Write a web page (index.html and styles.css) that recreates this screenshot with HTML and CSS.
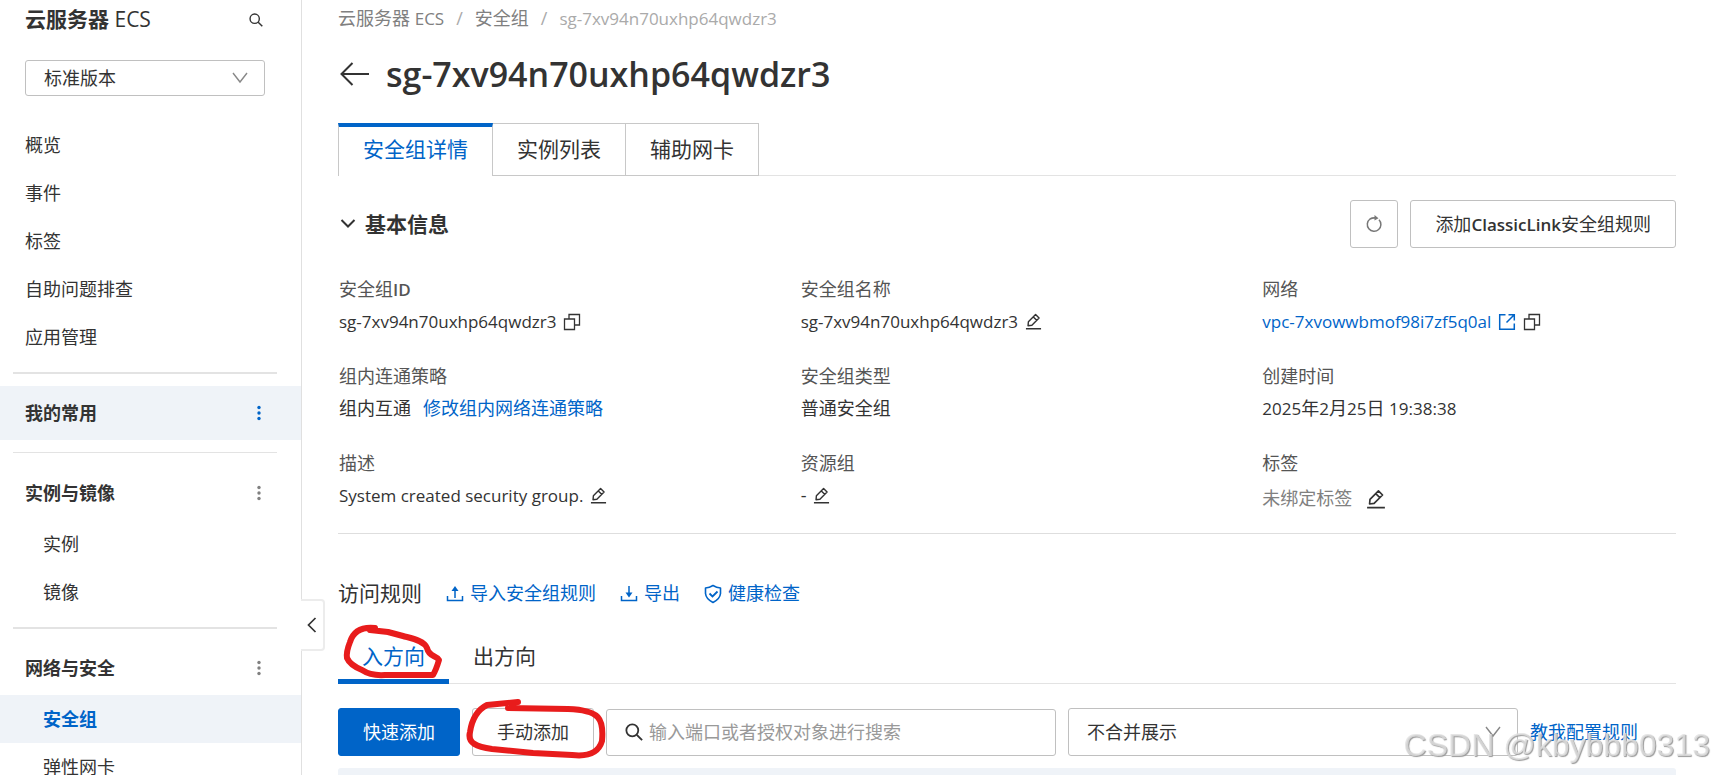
FILE: index.html
```html
<!DOCTYPE html>
<html lang="zh-CN">
<head>
    <meta charset="UTF-8">
    <meta name="viewport" content="width=device-width, initial-scale=1.0">
    <title>云服务器 ECS - 安全组</title>
    <link rel="stylesheet" href="styles.css">
</head>
<body>
    <!-- shared icons -->
    <svg class="sprite" aria-hidden="true">
        <symbol id="icon-copy" viewBox="0 0 18 18">
            <path d="M1.500 6h10v10.500h-10zM6 6V1.500h10.500v10.500h-5" fill="none" stroke="currentColor" stroke-width="1.300"/>
        </symbol>
        <symbol id="icon-edit" viewBox="0 0 18 18">
            <path d="M1 16.700h16M3.200 13.500l.4-4.200 7.600-7.600 3.700 3.700-7.600 7.600zM8.800 4.200l3.600 3.600" fill="none" stroke="currentColor" stroke-width="1.500" stroke-linejoin="round"/>
        </symbol>
        <symbol id="icon-more" viewBox="0 0 4 16">
            <circle cx="2" cy="2.500" r="1.700"/><circle cx="2" cy="8" r="1.700"/><circle cx="2" cy="13.500" r="1.700"/>
        </symbol>
        <symbol id="icon-search" viewBox="0 0 16 16">
            <path d="M10.500 10.500L15.200 15.200" stroke="currentColor" stroke-width="1.700"/>
            <circle cx="6.500" cy="6.500" r="5.300" fill="none" stroke="currentColor" stroke-width="1.600"/>
        </symbol>
        <symbol id="icon-down" viewBox="0 0 16 12">
            <path d="M1 1l7 9 7-9" fill="none" stroke="currentColor" stroke-width="1.400"/>
        </symbol>
    </svg>

    <div class="layout">
        <aside class="sidebar">
            <div class="sidebar-title">
                <h2>云服务器 <span>ECS</span></h2>
                <button class="icon-btn" aria-label="搜索"><svg width="14" height="14"><use href="#icon-search"/></svg></button>
            </div>
            <div class="select-wrap version">
                <select aria-label="版本"><option>标准版本</option></select>
                <svg width="16" height="12"><use href="#icon-down"/></svg>
            </div>
            <nav>
                <a class="nav-item" href="#">概览</a>
                <a class="nav-item" href="#">事件</a>
                <a class="nav-item" href="#">标签</a>
                <a class="nav-item" href="#">自助问题排查</a>
                <a class="nav-item" href="#">应用管理</a>
                <hr class="nav-line">
                <div class="nav-group current">
                    我的常用
                    <button class="icon-btn" aria-label="更多"><svg width="4" height="16"><use href="#icon-more"/></svg></button>
                </div>
                <hr class="nav-line thin">
                <div class="nav-group">
                    实例与镜像
                    <button class="icon-btn" aria-label="更多"><svg width="4" height="16"><use href="#icon-more"/></svg></button>
                </div>
                <a class="nav-item sub" href="#">实例</a>
                <a class="nav-item sub" href="#">镜像</a>
                <hr class="nav-line">
                <div class="nav-group">
                    网络与安全
                    <button class="icon-btn" aria-label="更多"><svg width="4" height="16"><use href="#icon-more"/></svg></button>
                </div>
                <a class="nav-item sub active" href="#">安全组</a>
                <a class="nav-item sub" href="#">弹性网卡</a>
            </nav>
            <button class="collapse" aria-label="收起">
                <svg width="10" height="16" viewBox="0 0 10 16"><path d="M8.500 1L1.500 8l7 7" fill="none" stroke="#333" stroke-width="1.700"/></svg>
            </button>
        </aside>

        <main class="main">
            <div class="breadcrumb">
                <a href="#">云服务器 <span class="latin">ECS</span></a>
                <span class="slash">/</span>
                <a href="#">安全组</a>
                <span class="slash">/</span>
                <span class="here latin">sg-7xv94n70uxhp64qwdzr3</span>
            </div>
            <div class="page-title">
                <button class="icon-btn" aria-label="返回">
                    <svg width="29" height="24" viewBox="0 0 29 24"><path d="M12.500 1L1.500 12l11 11M1.500 12H29" fill="none" stroke="#333" stroke-width="2"/></svg>
                </button>
                <h1>sg-7xv94n70uxhp64qwdzr3</h1>
            </div>

            <div class="tabs">
                <button class="tab active">安全组详情</button>
                <button class="tab">实例列表</button>
                <button class="tab">辅助网卡</button>
            </div>

            <div class="section-head">
                <svg width="16" height="12" viewBox="0 0 16 12"><path d="M1.500 2L8 8.500 14.500 2" fill="none" stroke="#333" stroke-width="2"/></svg>
                <h3>基本信息</h3>
                <button class="btn refresh" aria-label="刷新">
                    <svg width="18" height="18" viewBox="0 0 18 18"><path d="M14 4.700A6.800 6.800 0 1 1 5 4Q7.500 2.500 11 3" fill="none" stroke="#777" stroke-width="1.500"/><path d="M9.500 0l4 3.200-4 2.300z" fill="#777"/></svg>
                </button>
                <button class="btn">添加<span class="latin medium">ClassicLink</span>安全组规则</button>
            </div>

            <dl class="info">
                <div>
                    <dt>安全组<span class="latin medium">ID</span></dt>
                    <dd><span class="latin">sg-7xv94n70uxhp64qwdzr3</span><button class="icon-btn" aria-label="复制"><svg width="18" height="18"><use href="#icon-copy"/></svg></button></dd>
                </div>
                <div>
                    <dt>安全组名称</dt>
                    <dd><span class="latin">sg-7xv94n70uxhp64qwdzr3</span><button class="icon-btn" aria-label="编辑"><svg width="17" height="17"><use href="#icon-edit"/></svg></button></dd>
                </div>
                <div>
                    <dt>网络</dt>
                    <dd>
                        <a class="latin" href="#">vpc-7xvowwbmof98i7zf5q0al</a>
                        <a href="#" aria-label="打开"><svg width="18" height="18" viewBox="0 0 18 18"><path d="M7.500 1.700H1.700v14.600h14.600v-5.800M10.500 1.700h5.800v5.800M16 2L8.500 9.500" fill="none" stroke="currentColor" stroke-width="1.500"/></svg></a>
                        <button class="icon-btn" aria-label="复制"><svg width="18" height="18"><use href="#icon-copy"/></svg></button>
                    </dd>
                </div>
                <div>
                    <dt>组内连通策略</dt>
                    <dd class="policy">组内互通<a href="#">修改组内网络连通策略</a></dd>
                </div>
                <div>
                    <dt>安全组类型</dt>
                    <dd>普通安全组</dd>
                </div>
                <div>
                    <dt>创建时间</dt>
                    <dd><span><span class="latin">2025</span>年<span class="latin">2</span>月<span class="latin">25</span>日 <span class="latin">19:38:38</span></span></dd>
                </div>
                <div>
                    <dt>描述</dt>
                    <dd><span class="latin">System created security group.</span><button class="icon-btn" aria-label="编辑"><svg width="17" height="17"><use href="#icon-edit"/></svg></button></dd>
                </div>
                <div>
                    <dt>资源组</dt>
                    <dd>-<button class="icon-btn" aria-label="编辑"><svg width="17" height="17"><use href="#icon-edit"/></svg></button></dd>
                </div>
                <div>
                    <dt>标签</dt>
                    <dd class="tags">未绑定标签<button class="icon-btn" aria-label="编辑"><svg width="20" height="20"><use href="#icon-edit"/></svg></button></dd>
                </div>
            </dl>

            <div class="rules-head">
                <h3>访问规则</h3>
                <a href="#"><svg width="18" height="16" viewBox="0 0 18 16"><path d="M1.500 10v4.500h15V10M9 12V3" fill="none" stroke="currentColor" stroke-width="1.500"/><path d="M5.500 5L9 0l3.500 5z" fill="currentColor"/></svg>导入安全组规则</a>
                <a href="#"><svg width="18" height="16" viewBox="0 0 18 16"><path d="M1.500 10v4.500h15V10M9 0v8" fill="none" stroke="currentColor" stroke-width="1.500"/><path d="M5.500 6.500L9 11.500l3.500-5z" fill="currentColor"/></svg>导出</a>
                <a href="#"><svg width="18" height="20" viewBox="0 0 18 20"><path d="M9 1.500Q12.500 3.800 16.500 4v5.500Q16 15 9 18.500 2 15 1.500 9.500V4Q5.500 3.800 9 1.500z" fill="none" stroke="currentColor" stroke-width="1.600" stroke-linejoin="round"/><path d="M5.500 9.500l3 3 5-5" fill="none" stroke="currentColor" stroke-width="1.800"/></svg>健康检查</a>
            </div>

            <div class="direction-tabs">
                <button class="direction active">入方向
                    <svg class="mark" width="108" height="60" viewBox="340 622 108 60"><path d="M375 629Q355 627 350 643 346 653 347 659 350 666 362 671 371 677 385 676L433 676Q436 671 439 661C436 656 429 658 427 649 424 641 410 639 403 637L388 633 370 631"/></svg>
                </button>
                <button class="direction">出方向</button>
            </div>

            <div class="toolbar">
                <button class="btn primary">快速添加</button>
                <button class="btn manual">手动添加
                    <svg class="mark" width="146" height="66" viewBox="464 696 146 66"><path d="M518 703L487 706Q473 713 470 733C467 744 477 748 492 750L533 754 572 756Q597 759 602 742C604 720 600 711 568 710L508 709"/></svg>
                </button>
                <label class="search">
                    <svg width="18" height="18"><use href="#icon-search"/></svg>
                    <input type="text" aria-label="搜索规则" placeholder="输入端口或者授权对象进行搜索">
                </label>
                <div class="select-wrap merge">
                    <select aria-label="展示方式"><option>不合并展示</option></select>
                    <svg width="16" height="12"><use href="#icon-down"/></svg>
                </div>
                <a href="#">教我配置规则</a>
            </div>
            <div class="table-head"></div>
        </main>
    </div>
    <div class="watermark">CSDN @kbybbb0313</div>
</body>
</html>
```

FILE: styles.css
```css
* {
    box-sizing: border-box;
}
body {
    margin: 0;
    height: 100vh;
    overflow: hidden;
    font-family: "Open Sans", "Noto Sans CJK SC", sans-serif;
    font-size: 18px;
    line-height: 27px;
    color: #333;
    background: #fff;
}
h1, h2, h3, dl, dd {
    margin: 0;
}
a {
    color: #0064c8;
    text-decoration: none;
}
button, input, select {
    font: inherit;
    color: inherit;
}
button {
    cursor: pointer;
}
svg {
    display: block;
    flex: none;
}
.sprite {
    display: none;
}
.icon-btn {
    padding: 0;
    border: none;
    background: none;
}
.latin {
    font-size: 17px;
}
.medium {
    font-weight: 600;
}
.layout {
    display: flex;
    height: 100%;
}

/* Sidebar */
.sidebar {
    position: relative;
    flex: none;
    width: 302px;
    border-right: 1px solid #e0e0e0;
}
.sidebar-title {
    display: flex;
    justify-content: space-between;
    align-items: center;
    height: 60px;
    padding: 0 38px 21px 25px;
}
.sidebar-title h2 {
    font-size: 21px;
}
.sidebar-title h2 span {
    font-weight: 400;
}
.select-wrap {
    position: relative;
}
.select-wrap select {
    appearance: none;
    width: 100%;
    height: 100%;
    padding: 0 18px;
    border: 1px solid #c0c0c0;
    border-radius: 3px;
    background: #fff;
}
.select-wrap svg {
    position: absolute;
    top: 50%;
    right: 17px;
    margin-top: -6px;
    color: #888;
    pointer-events: none;
}
.version {
    height: 36px;
    margin: 0 36px 25px 25px;
}
.nav-item {
    display: block;
    padding-left: 25px;
    line-height: 48px;
    color: #333;
}
.nav-item.sub {
    padding-left: 43px;
}
.nav-item.active {
    background: #eff3f8;
    color: #0064c8;
    font-weight: bold;
}
.nav-group {
    display: flex;
    justify-content: space-between;
    align-items: center;
    height: 54px;
    padding: 0 40px 0 25px;
    font-weight: bold;
}
.nav-group svg {
    fill: #808080;
}
.nav-group.current {
    background: #eff3f8;
}
.nav-group.current svg {
    fill: #0064c8;
}
.nav-line {
    height: 2px;
    margin: 11px 24px 12px 13px;
    border: none;
    background: #e3e3e3;
}
.nav-line.thin {
    height: 1px;
    margin: 12px 24px 13px 13px;
}
.collapse {
    position: absolute;
    left: 301px;
    top: 599px;
    display: flex;
    align-items: center;
    width: 24px;
    height: 52px;
    padding: 0 6px;
    border: 2px solid #ececec;
    border-left: none;
    border-radius: 0 4px 4px 0;
    background: #fff;
}

/* Main */
.main {
    flex: 1;
    min-width: 0;
    padding: 5px 38px 0 36px;
}
.breadcrumb {
    display: flex;
    gap: 12px;
}
.breadcrumb a {
    color: #808080;
}
.breadcrumb .slash, .breadcrumb .here {
    color: #aaa;
}
.page-title {
    display: flex;
    align-items: center;
    gap: 17px;
    margin: 18px 0 25px 2px;
}
.page-title h1 {
    font-size: 34px;
    font-weight: 600;
    line-height: 48px;
}
.tabs {
    display: flex;
    height: 53px;
    border-bottom: 1px solid #e3e3e3;
}
.tab {
    height: 53px;
    padding: 0 24px;
    border: 1px solid #c8c8c8;
    border-left: none;
    background: #fff;
    font-size: 21px;
}
.tab.active {
    border-left: 1px solid #c8c8c8;
    border-top: 4px solid #0064c8;
    border-bottom: none;
    color: #0064c8;
    padding-bottom: 4px;
}
.section-head {
    display: flex;
    align-items: center;
    gap: 12px;
    margin: 24px 0 28px 2px;
}
.section-head h3 {
    flex: 1;
    margin-left: -3px;
    font-size: 21px;
}
.btn {
    position: relative;
    height: 48px;
    padding: 0 24px;
    border: 1px solid #c0c0c0;
    border-radius: 3px;
    background: #fff;
    white-space: nowrap;
}
.btn.refresh {
    display: flex;
    align-items: center;
    justify-content: center;
    width: 48px;
    padding: 0;
}
.btn.primary {
    border-color: #0064c8;
    background: #0064c8;
    color: #fff;
}
.info {
    display: grid;
    grid-template-columns: repeat(3, 1fr);
    gap: 28px 48px;
    padding: 0 0 24px 1px;
    border-bottom: 1px solid #dedede;
}
.info dt {
    margin-bottom: 5px;
    color: #555;
}
.info dd {
    display: flex;
    align-items: center;
    gap: 7px;
    height: 27px;
}
.info .policy {
    gap: 12px;
}
.info .tags {
    gap: 14px;
    height: 33px;
    margin-bottom: -6px;
    color: #808080;
}
.info .tags button {
    color: #333;
}
.rules-head {
    display: flex;
    align-items: center;
    gap: 24px;
    margin: 46px 0 24px;
}
.rules-head h3 {
    font-size: 21px;
    font-weight: 400;
}
.rules-head a {
    display: flex;
    align-items: center;
    gap: 6px;
}
.direction-tabs {
    display: flex;
    height: 53px;
    border-bottom: 1px solid #e3e3e3;
}
.direction {
    position: relative;
    height: 53px;
    padding: 3px 24px 0;
    border: none;
    border-bottom: 5px solid transparent;
    background: none;
    font-size: 21px;
}
.direction.active {
    border-bottom-color: #0064c8;
    color: #0064c8;
}
/* hand-drawn circles over the buttons */
.mark {
    position: absolute;
    z-index: 1;
    fill: none;
    stroke: #e81c1c;
    stroke-width: 6;
    stroke-linecap: round;
    stroke-linejoin: round;
    pointer-events: none;
}
.direction .mark {
    left: 2px;
    top: -10px;
}
.manual .mark {
    left: -9px;
    top: -14px;
}
.toolbar {
    display: flex;
    align-items: center;
    gap: 12px;
    margin: 24px 0 12px;
}
.search {
    display: flex;
    align-items: center;
    gap: 6px;
    flex: 0 1 450px;
    height: 47px;
    padding: 0 18px;
    border: 1px solid #c0c0c0;
    border-radius: 3px;
}
.search input {
    flex: 1;
    min-width: 0;
    padding: 0;
    border: none;
    outline: none;
}
.search input::placeholder {
    color: #999;
}
.merge {
    flex: 0 1 450px;
    height: 48px;
}
.table-head {
    height: 48px;
    border-radius: 3px 3px 0 0;
    background: #eff3f8;
}
.watermark {
    position: fixed;
    right: 4px;
    bottom: 10px;
    font-family: "Liberation Sans", sans-serif;
    font-size: 32px;
    line-height: 40px;
    color: rgba(225, 225, 225, 0.8);
    text-shadow: 1px 1px 1px #999;
    pointer-events: none;
}
```
